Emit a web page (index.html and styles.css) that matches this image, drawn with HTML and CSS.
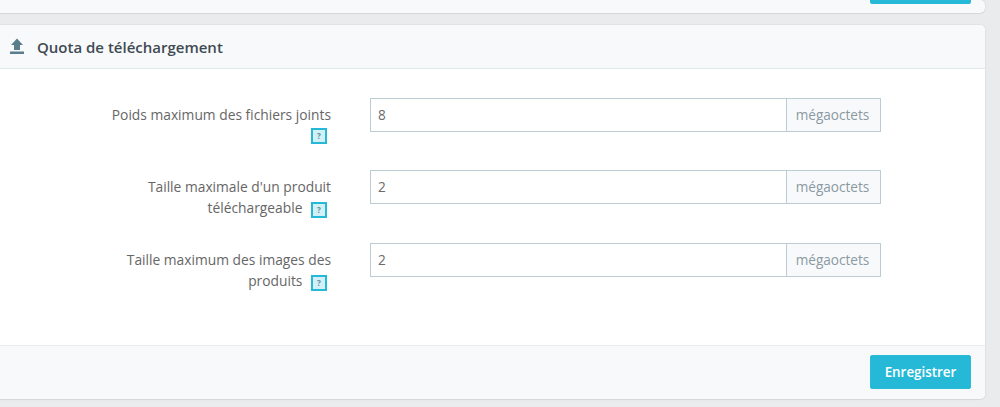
FILE: index.html
```html
<!DOCTYPE html>
<html lang="fr">
<head>
<meta charset="utf-8">
<title>Quota de téléchargement</title>
<link rel="stylesheet" href="styles.css">
</head>
<body>
<div class="page">
  <div class="card card-top">
    <div class="top-button"></div>
  </div>
  <section class="card">
    <header class="card-head">
      <svg class="head-icon" viewBox="0 0 14 16" width="14" height="16" aria-hidden="true">
        <path d="M7 0.5 L13 7 H10 V12 H4 V7 H1 Z M0 13.6 H14 V16 H0 Z"/>
      </svg>
      <h2 class="card-title">Quota de téléchargement</h2>
    </header>
    <div class="card-body">
      <div class="row">
        <label class="row-label">Poids maximum des fichiers joints <span class="help help-solo">?</span></label>
        <div class="field"><div class="field-input">8</div><div class="field-addon">mégaoctets</div></div>
      </div>
      <div class="row">
        <label class="row-label">Taille maximale d'un produit téléchargeable <span class="help">?</span></label>
        <div class="field"><div class="field-input">2</div><div class="field-addon">mégaoctets</div></div>
      </div>
      <div class="row">
        <label class="row-label">Taille maximum des images des produits <span class="help">?</span></label>
        <div class="field"><div class="field-input">2</div><div class="field-addon">mégaoctets</div></div>
      </div>
    </div>
    <footer class="card-foot">
      <button class="save" type="button">Enregistrer</button>
    </footer>
  </section>
</div>
</body>
</html>
```
FILE: styles.css
```css
* { box-sizing: border-box; }
html, body { margin: 0; height: 100%; }
body {
  background: #e9ebec;
  font-family: "Open Sans", "Liberation Sans", sans-serif;
  color: #666;
  overflow: hidden;
}
.page {
  display: flex;
  flex-direction: column;
  gap: 12px;
  margin-left: -10px;
  width: 995px;
}
.card {
  background: #fff;
  border-radius: 5px;
  box-shadow: 0 0 2px rgba(0, 0, 0, .12), 0 1px 1px rgba(0, 0, 0, .05);
  overflow: hidden;
}
.card-top {
  height: 13px;
  background: #f8f9fb;
  display: flex;
  justify-content: flex-end;
  padding-right: 14px;
}
.top-button {
  width: 101px;
  height: 4px;
  background: #25b9d7;
  border-radius: 0 0 2px 2px;
}
.card-head {
  height: 44px;
  background: #f8f9fb;
  border-bottom: 1px solid #dfe9ec;
  display: flex;
  align-items: center;
  padding-left: 20px;
  gap: 13px;
}
.head-icon { fill: #5a7d8c; margin-top: -2px; }
.card-title {
  margin: 0;
  font-size: 15px;
  font-weight: 600;
  color: #3f4a52;
}
.card-body {
  height: 276px;
  padding-top: 29px;
  display: flex;
  flex-direction: column;
  gap: 17.4px;
}
.row {
  display: flex;
  align-items: flex-start;
  height: 55px;
}
.row-label {
  width: 237px;
  margin-left: 104px;
  padding-top: 6px;
  text-align: right;
  font-size: 13.8px;
  line-height: 21px;
  color: #666;
}
.help {
  display: inline-block;
  width: 16px;
  height: 16px;
  margin: -4px 4px -4px 5px;
  border: 2px solid #25b9d7;
  background: #d3f0f6;
  color: #5a8ea0;
  font-size: 8px;
  font-weight: 700;
  line-height: 12px;
  text-align: center;
  vertical-align: 0;
}
.help-solo { vertical-align: 2px; }
.field {
  display: flex;
  margin-left: 39px;
  width: 511px;
  height: 34px;
  border: 1px solid #bbcdd2;
  font-size: 13.6px;
  line-height: 32px;
}
.field-input {
  flex: 1;
  padding-left: 7px;
  color: #6c6c6c;
}
.field-addon {
  width: 94px;
  padding-right: 2px;
  border-left: 1px solid #bbcdd2;
  background: #f8f9fb;
  color: #8a9aa3;
  text-align: center;
}
.card-foot {
  height: 54px;
  background: #f8f9fb;
  border-top: 1px solid #e7ecef;
  display: flex;
  justify-content: flex-end;
  align-items: flex-start;
  padding: 9px 14px 0 0;
}
.save {
  width: 101px;
  height: 34px;
  padding: 0;
  background: #25b9d7;
  border: 1px solid #2abbd8;
  border-radius: 2px;
  color: #fff;
  font-family: inherit;
  font-size: 13.4px;
  font-weight: 600;
}
```
